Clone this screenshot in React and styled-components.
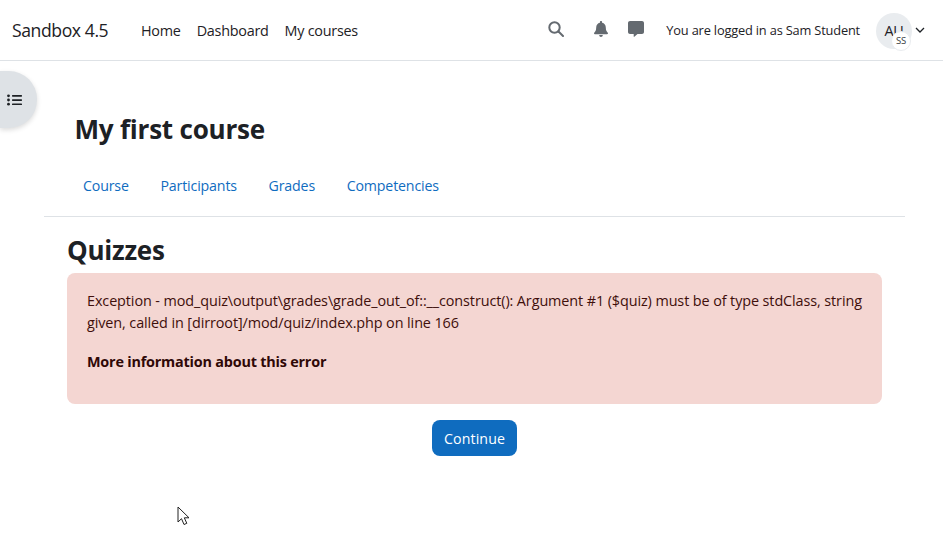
import React from 'react';
import styled, { createGlobalStyle } from 'styled-components';

const Global = createGlobalStyle`
  html, body { margin: 0; padding: 0; background: #fff; }
  body { font-family: "Open Sans", "Noto Sans", "Liberation Sans", sans-serif; color: #1d2125; overflow: hidden; }
  #root { height: 543px; position: relative; }
`;
const Nav = styled.header`
  height: 60px; border-bottom: 1px solid #dee2e6; display: flex; align-items: center; padding: 0 18px 0 12px; box-sizing: content-box;
`;
const Brand = styled.div`font-size: 17.6px; letter-spacing: -0.42px; width: 129px; color: #1d2125;`;
const Menu = styled.nav`display: flex; gap: 16px; flex: 1;`;
const MenuLink = styled.a`font-size: 14.4px; letter-spacing: -0.26px; color: #1d2125;`;
const IconSlot = styled.span`
  display: flex; color: #646a70; width: ${p => p.$w}px; justify-content: flex-start; margin-top: -3px;
`;
const LoggedIn = styled.span`font-size: 12.8px; letter-spacing: -0.17px; color: #1d2125; margin-right: 17px;`;
const Avatar = styled.span`
  position: relative; width: 36px; height: 36px; border-radius: 50%; background: #e9ecef; display: flex; align-items: center; justify-content: center;
  font-size: 14.4px; color: #1d2125; letter-spacing: -0.2px; margin: 1px 3px 0 -1px;
`;
const MiniAvatar = styled.span`
  position: absolute; left: 15px; top: 18px; width: 18px; height: 18px; border-radius: 50%; background: #fff; border: 1px solid #e9ecef;
  font-size: 9.5px; letter-spacing: -0.2px; display: flex; align-items: center; justify-content: center; color: #343a40;
`;
const DrawerToggle = styled.button`
  position: absolute; left: 0; top: 71px; width: 37px; height: 57px; border: 0; padding: 0 0 0 7px; background: #dee2e6;
  border-radius: 0 28px 28px 0; box-shadow: 0 2px 5px rgba(0,0,0,.14); display: flex; align-items: center; color: #1d2125;
`;
const Main = styled.main`padding: 52px 38px 0 44px;`;
const CourseTitle = styled.h1`font-size: 26.1px; line-height: 32px; font-weight: 700; letter-spacing: -0.25px; margin: 0 0 0 30.500px; color: #1d2125;`;
const Tabs = styled.nav`display: flex; gap: 31.600px; padding: 31px 39px 0; height: 40px; border-bottom: 1px solid #dee2e6; box-sizing: content-box;`;
const Tab = styled.a`font-size: 14.2px; letter-spacing: -0.15px; color: #0f6cbf; line-height: 20px;`;
const Region = styled.section`padding: 0 23px; display: flex; flex-direction: column;`;
const Heading = styled.h2`font-size: 26px; line-height: 32px; font-weight: 700; letter-spacing: -0.25px; margin: 17px 0 7px; color: #1d2125;`;
const Alert = styled.div`
  height: 131px; box-sizing: border-box; background: #f4d6d2; border-radius: 8px; padding: 17px 20px; font-size: 14.4px; letter-spacing: -0.095px; line-height: 22px; color: #3f0f0b;
`;
const Message = styled.p`margin: 0 0 17px;`;
const Strong = styled.b`font-weight: 700; letter-spacing: -0.2px; color: #2f0806;`;
const Actions = styled.div`display: flex; justify-content: center; margin-top: 16px;`;
const Continue = styled.button`
  width: 85px; height: 36px; border: 0; border-radius: 8px; background: #0f6cbf; color: #fff; font: 14.2px "Open Sans", sans-serif; letter-spacing: 0.12px; padding: 0;
`;
const Cursor = styled.svg`position: absolute; left: 177px; top: 506px;`;

export default function App() {
  return (
    <>
      <Global />
      <Nav>
        <Brand>Sandbox 4.5</Brand>
        <Menu>
          <MenuLink>Home</MenuLink>
          <MenuLink>Dashboard</MenuLink>
          <MenuLink>My courses</MenuLink>
        </Menu>
        <IconSlot $w={46}>
          <svg width="16" height="16" viewBox="0 0 16 16" fill="none" stroke="currentColor" strokeWidth="2"><circle cx="6.500" cy="6.500" r="5.200" /><path d="M10.500 10.500 15 15" strokeLinecap="round" /></svg>
        </IconSlot>
        <IconSlot $w={34}>
          <svg width="14" height="16" viewBox="0 0 14 16" fill="currentColor"><path d="M7 0c.7 0 1.100.5 1.100 1.100v.6c2.300.5 3.700 2.300 3.700 4.700 0 3.400 1.200 4.400 2 5.300.2.200.2.400.2.600 0 .5-.4.900-.9.900H.9C.4 13.200 0 12.800 0 12.300c0-.2 0-.4.200-.6.800-.9 2-1.900 2-5.300 0-2.400 1.400-4.200 3.700-4.700v-.6C5.900.5 6.300 0 7 0zM5.200 14h3.600c0 1.100-.8 2-1.800 2s-1.800-.9-1.800-2z" /></svg>
        </IconSlot>
        <IconSlot $w={38}>
          <svg width="16" height="16" viewBox="0 0 16 16" fill="currentColor"><path d="M2 0h12c1.100 0 2 .9 2 2v9c0 1.100-.9 2-2 2H9.500L6.300 15.800c-.3.200-.6 0-.6-.3V13H2c-1.100 0-2-.9-2-2V2C0 .9.900 0 2 0z" /></svg>
        </IconSlot>
        <LoggedIn>You are logged in as Sam Student</LoggedIn>
        <Avatar>AU<MiniAvatar>SS</MiniAvatar></Avatar>
        <svg width="10" height="6" viewBox="0 0 10 6" fill="none" stroke="#1d2125" strokeWidth="1.300"><path d="M1 1l4 4 4-4" /></svg>
      </Nav>
      <DrawerToggle aria-label="Open course index">
        <svg width="15" height="12" viewBox="0 0 15 12" fill="currentColor"><circle cx="1.500" cy="1.800" r="1.400" /><circle cx="1.500" cy="6" r="1.400" /><circle cx="1.500" cy="10.200" r="1.400" /><rect x="5" y="1" width="10" height="1.700" rx=".6" /><rect x="5" y="5.200" width="10" height="1.700" rx=".6" /><rect x="5" y="9.400" width="10" height="1.700" rx=".6" /></svg>
      </DrawerToggle>
      <Main>
        <CourseTitle>My first course</CourseTitle>
        <Tabs>
          <Tab>Course</Tab>
          <Tab>Participants</Tab>
          <Tab>Grades</Tab>
          <Tab>Competencies</Tab>
        </Tabs>
        <Region>
          <Heading>Quizzes</Heading>
          <Alert>
            <Message>Exception - mod_quiz\output\grades\grade_out_of::__construct(): Argument #1 ($quiz) must be of type stdClass, string given, called in [dirroot]/mod/quiz/index.php on line 166</Message>
            <Strong>More information about this error</Strong>
          </Alert>
          <Actions><Continue>Continue</Continue></Actions>
        </Region>
      </Main>
      <Cursor width="14" height="20" viewBox="0 0 14 20"><path d="M1 1v15l3.500-3.300 2.500 5.800 2.800-1.200-2.500-5.500h4.700z" fill="#fff" stroke="#222" strokeWidth="1" /></Cursor>
    </>
  );
}
